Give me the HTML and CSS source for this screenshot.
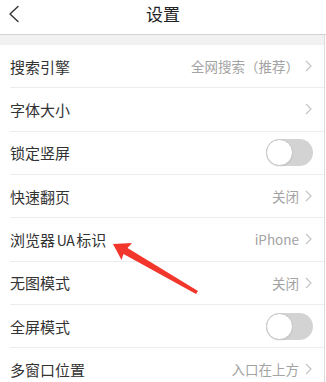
FILE: index.html
```html
<!DOCTYPE html>
<html lang="zh-CN">
<head>
<meta charset="utf-8">
<title>设置</title>
<link rel="stylesheet" href="styles.css">
</head>
<body>
<div class="page">
  <header class="nav">
    <span class="back">
      <svg width="12" height="18" viewBox="0 0 12 18"><polyline points="10,1.5 2,9 10,16.5" fill="none" stroke="#333" stroke-width="1.4" stroke-linecap="round" stroke-linejoin="round"/></svg>
    </span>
    <h1 class="title">设置</h1>
  </header>
  <div class="content">
    <div class="gap"></div>
    <ul class="list">
      <li class="row"><span class="label">搜索引擎</span><span class="right"><span class="value">全网搜索（推荐）</span><svg class="chev" width="7" height="12" viewBox="0 0 7 12"><polyline points="1,1 6,6 1,11" fill="none" stroke="#c4c4c4" stroke-width="1.2"/></svg></span></li>
      <li class="row"><span class="label">字体大小</span><span class="right"><svg class="chev" width="7" height="12" viewBox="0 0 7 12"><polyline points="1,1 6,6 1,11" fill="none" stroke="#c4c4c4" stroke-width="1.2"/></svg></span></li>
      <li class="row"><span class="label">锁定竖屏</span><span class="switch"><span class="knob"></span></span></li>
      <li class="row"><span class="label">快速翻页</span><span class="right"><span class="value">关闭</span><svg class="chev" width="7" height="12" viewBox="0 0 7 12"><polyline points="1,1 6,6 1,11" fill="none" stroke="#c4c4c4" stroke-width="1.2"/></svg></span></li>
      <li class="row"><span class="label tight">浏览器 <span class="latin">UA</span> 标识</span><span class="right"><span class="value">iPhone</span><svg class="chev" width="7" height="12" viewBox="0 0 7 12"><polyline points="1,1 6,6 1,11" fill="none" stroke="#c4c4c4" stroke-width="1.2"/></svg></span></li>
      <li class="row"><span class="label">无图模式</span><span class="right"><span class="value">关闭</span><svg class="chev" width="7" height="12" viewBox="0 0 7 12"><polyline points="1,1 6,6 1,11" fill="none" stroke="#c4c4c4" stroke-width="1.2"/></svg></span></li>
      <li class="row"><span class="label">全屏模式</span><span class="switch"><span class="knob"></span></span></li>
      <li class="row"><span class="label">多窗口位置</span><span class="right"><span class="value">入口在上方</span><svg class="chev" width="7" height="12" viewBox="0 0 7 12"><polyline points="1,1 6,6 1,11" fill="none" stroke="#c4c4c4" stroke-width="1.2"/></svg></span></li>
    </ul>
  </div>
  <svg class="arrow" width="326" height="382" viewBox="0 0 326 382">
    <polygon points="113,244 132,243 127.5,248 198,291 196,294 123.5,254 121.5,260" fill="#f2362c"/>
  </svg>
</div>
</body>
</html>
```

FILE: styles.css
```css
html, body {
  margin: 0;
  padding: 0;
  background: #fff;
}
body {
  font-family: "Noto Sans CJK SC", "Noto Sans", sans-serif;
  color: #333;
}
.page {
  position: relative;
  width: 326px;
  height: 382px;
  overflow: hidden;
  background: #fff;
}
.nav {
  height: 34px;
  border-bottom: 1px solid #d2d2d2;
  display: flex;
  align-items: flex-start;
  justify-content: center;
  position: relative;
}
.back {
  position: absolute;
  left: 8px;
  top: 5px;
  display: flex;
}
.title {
  margin: 0;
  font-size: 17px;
  font-weight: normal;
  line-height: 28px;
  color: #222;
}
.content {
  width: 325px;
  border-right: 1px solid #dcdcdc;
  box-sizing: border-box;
}
.gap {
  height: 10px;
  background: #f1f1f1;
}
.list {
  list-style: none;
  margin: 0;
  padding: 0;
}
.row {
  height: 42.33px;
  margin-left: 10px;
  padding-right: 11px;
  border-bottom: 1px solid #ececec;
  display: flex;
  align-items: center;
  justify-content: space-between;
}
.label {
  font-size: 15px;
  color: #333;
  white-space: nowrap;
}
.label.tight {
  word-spacing: -1.6px;
}
.latin {
  font-size: 14px;
  letter-spacing: -0.3px;
}
.right {
  display: flex;
  align-items: center;
  gap: 6px;
}
.value {
  font-size: 13.5px;
  color: #a3a3a3;
}
.chev {
  display: block;
  margin-right: 1px;
}
.switch {
  width: 47px;
  height: 27px;
  border-radius: 14px;
  background: #d3d3d3;
  position: relative;
  box-sizing: border-box;
}
.knob {
  position: absolute;
  left: 0;
  top: 0;
  width: 27px;
  height: 27px;
  border-radius: 50%;
  background: #fff;
  border: 1px solid #c6c6c6;
  box-sizing: border-box;
  box-shadow: 0 1px 1px rgba(0,0,0,0.06);
}
.arrow {
  position: absolute;
  left: 0;
  top: 0;
  pointer-events: none;
}
```
